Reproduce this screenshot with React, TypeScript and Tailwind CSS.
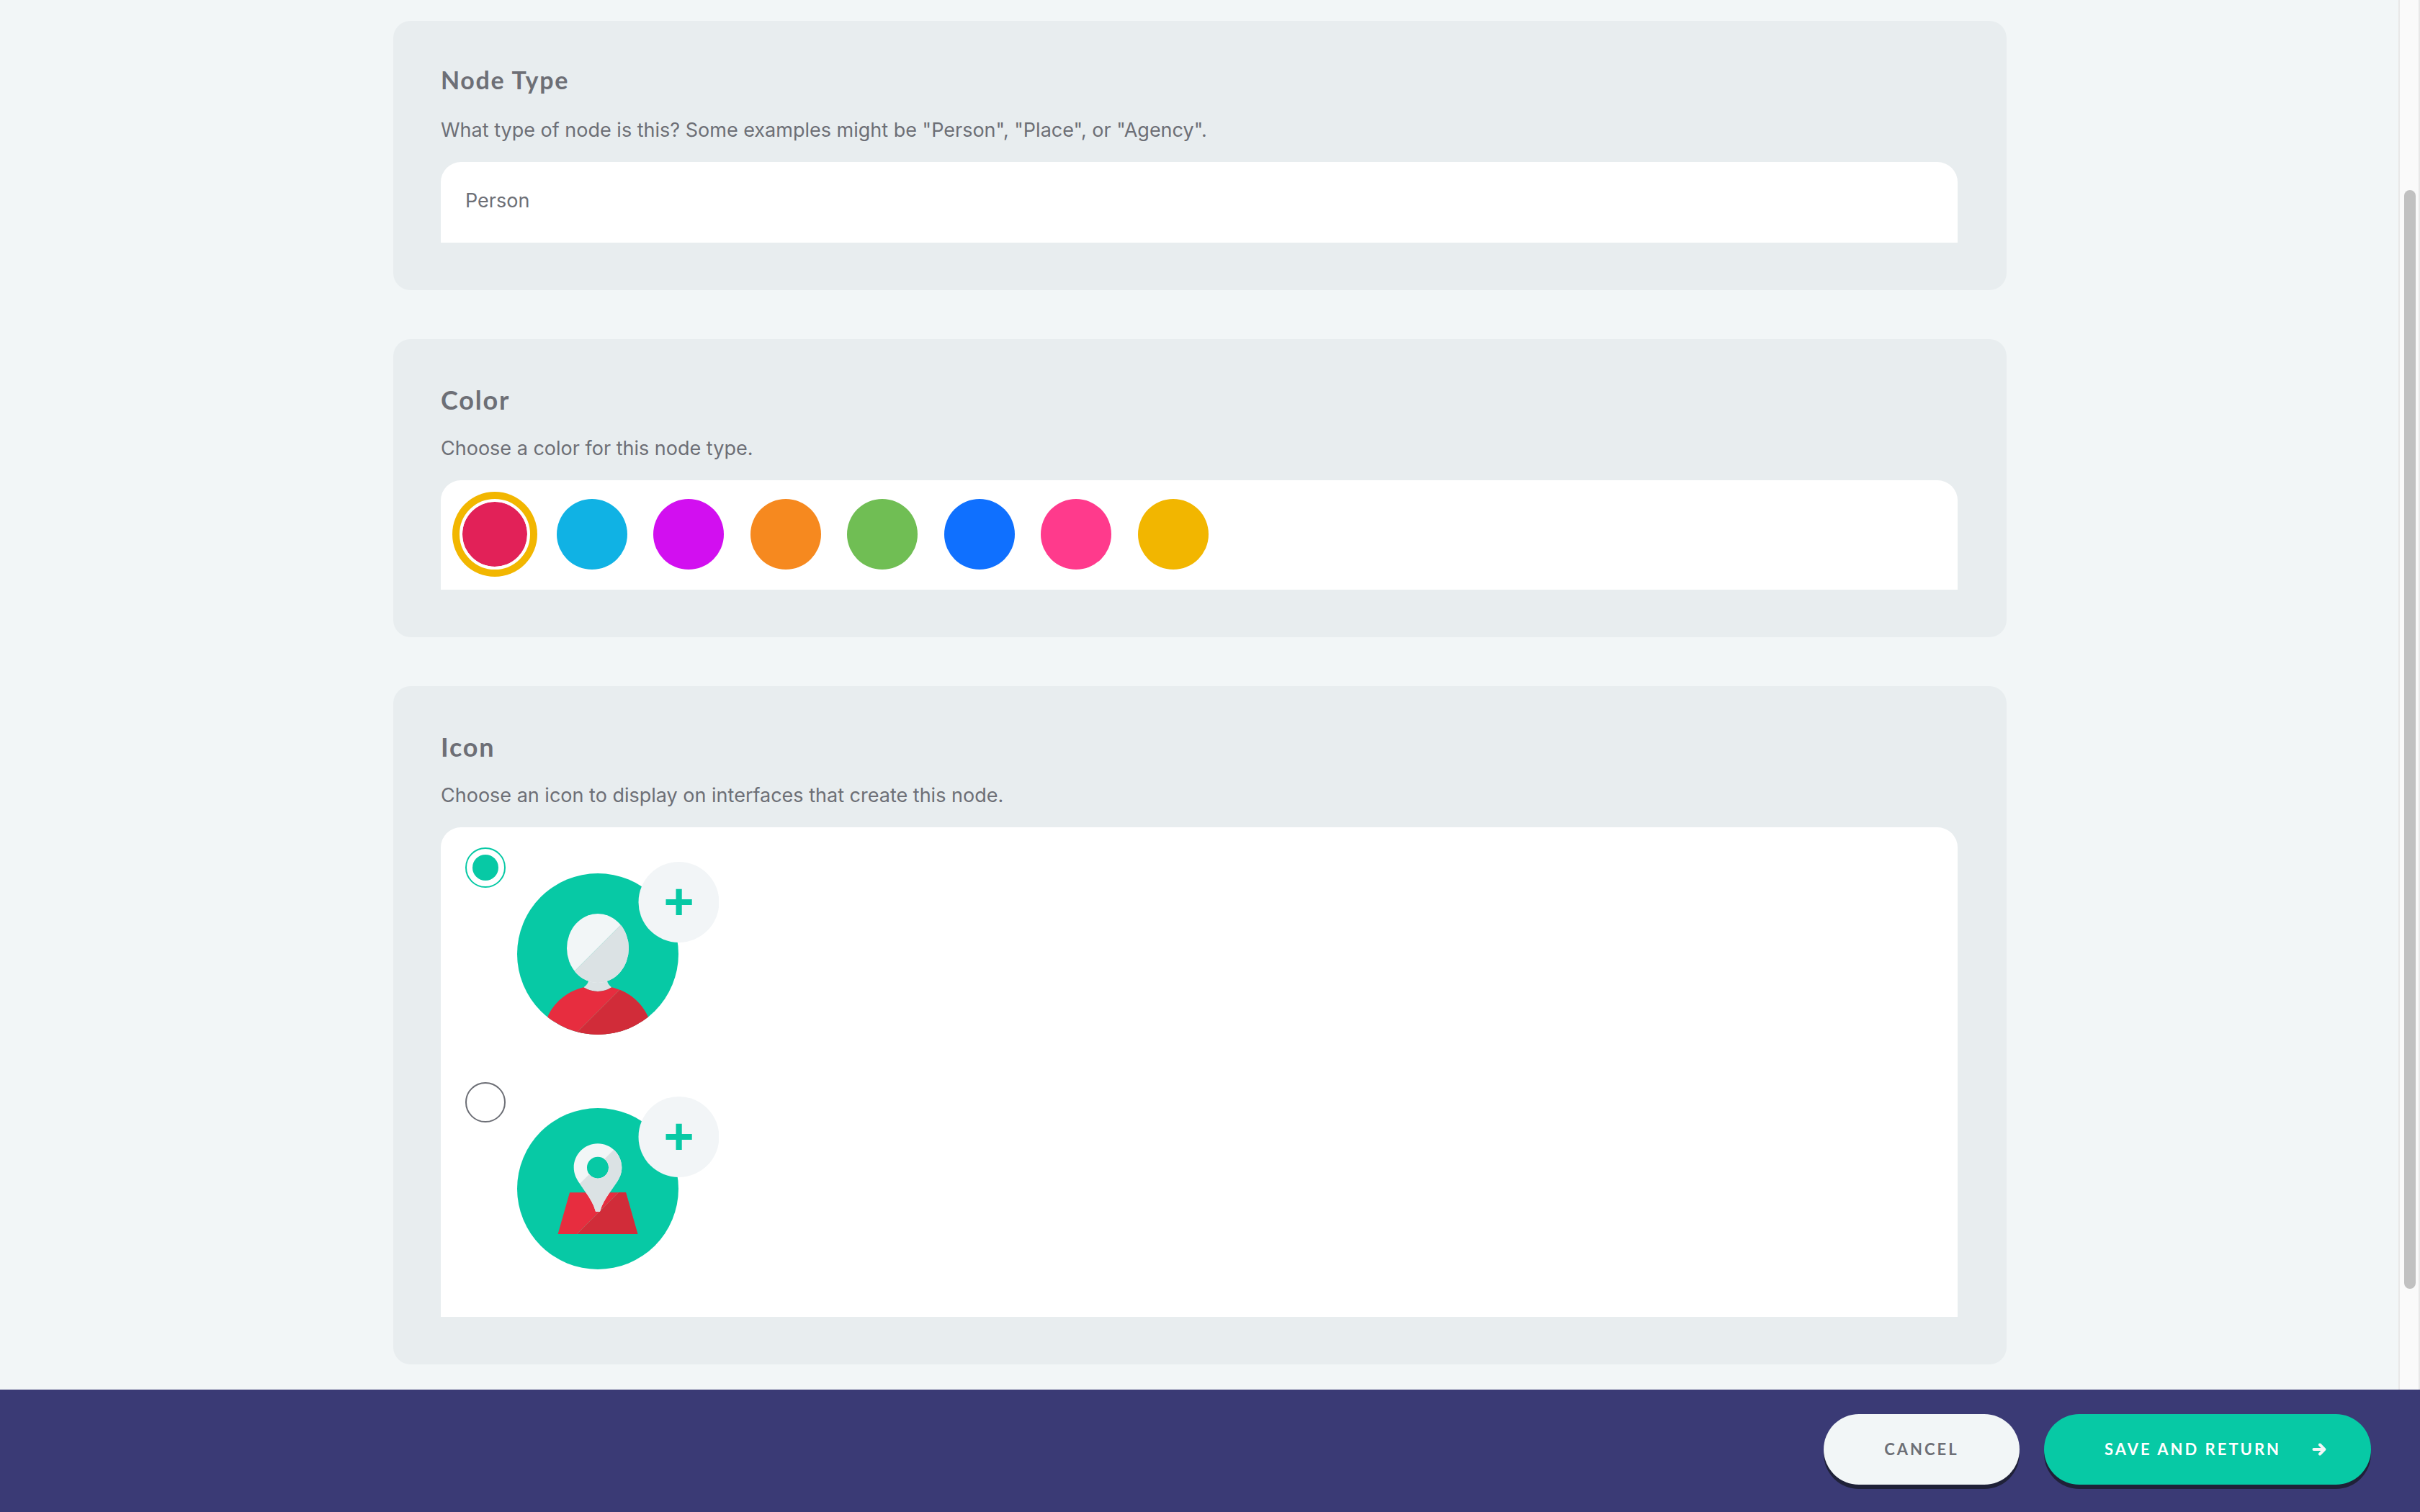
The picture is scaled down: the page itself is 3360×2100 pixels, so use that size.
import React, { useState } from "react";

type Swatch = { name: string; fill: string };

const SWATCHES: Swatch[] = [
  { name: "Red", fill: "bg-[#e22158]" },
  { name: "Sky", fill: "bg-[#10b2e4]" },
  { name: "Purple", fill: "bg-[#d20ff0]" },
  { name: "Orange", fill: "bg-[#f6891f]" },
  { name: "Green", fill: "bg-[#70be54]" },
  { name: "Blue", fill: "bg-[#0f70ff]" },
  { name: "Pink", fill: "bg-[#ff3a8c]" },
  { name: "Amber", fill: "bg-[#f2b600]" },
];

function AddBadge() {
  return (
    <>
      <circle cx="224.5" cy="56" r="56" fill="#f2f5f7" />
      <path d="M206.5 56H242.7M224.6 37.8V74" stroke="#07c9a5" strokeWidth="8.2" fill="none" />
    </>
  );
}

function PersonIcon() {
  const body =
    "M92.3 174.3C70 179.5 51 195 42 216L42 242H182L182 216C173 195 154 179.5 131.2 174.3Q122 180 112 180Q102 180 92.3 174.3Z";
  return (
    <svg viewBox="0 0 280 240" className="w-[280px]" role="img" aria-label="Add a person">
      <defs>
        <clipPath id="disc">
          <circle cx="112" cy="128" r="112" />
        </clipPath>
        <clipPath id="body">
          <path d={body} />
        </clipPath>
        <clipPath id="head">
          <ellipse cx="112" cy="120" rx="43" ry="48" />
        </clipPath>
      </defs>
      <circle cx="112" cy="128" r="112" fill="#07c9a5" />
      <path
        d="M99 160V165.7C98 169.5 95 172.5 92.3 174.3Q101 180 112 180Q123 180 131.2 174.3C129 172.5 126 169.5 125 165.7V160Z"
        fill="#dbe2e4"
      />
      <g clipPath="url(#head)">
        <rect x="60" y="60" width="110" height="120" fill="#f2f6f7" />
        <path d="M171.6 60L51.6 180H180V60Z" fill="#dbe2e4" />
        <path d="M171.6 60L51.6 180" stroke="#07c9a5" strokeOpacity="0.45" strokeWidth="0.4" />
      </g>
      <g clipPath="url(#disc)">
        <g clipPath="url(#body)">
          <rect x="30" y="160" width="170" height="84" fill="#e72d3f" />
          <path d="M160 160L76 244H200V160Z" fill="#d12c39" />
          <path d="M160 160L76 244" stroke="#9c8a72" strokeWidth="0.5" />
        </g>
      </g>
      <AddBadge />
    </svg>
  );
}

function PlaceIcon() {
  const pin =
    "M112 65.2C93.5 65.2 78.7 80.2 78.7 98.7C78.7 107 82 114 87 121L95.5 133.3C101.5 142 106.5 150.5 109 159.7H115C117.5 150.5 122.5 142 128.5 133.3L137 121C142 114 145.3 107 145.3 98.7C145.3 80.2 130.5 65.2 112 65.2ZM112 83.7A15 15 0 1 1 112 113.7A15 15 0 1 1 112 83.7Z";
  return (
    <svg viewBox="0 0 280 240" className="w-[280px]" role="img" aria-label="Add a place">
      <defs>
        <clipPath id="pin">
          <path d={pin} clipRule="evenodd" />
        </clipPath>
      </defs>
      <circle cx="112" cy="128" r="112" fill="#07c9a5" />
      <path d="M73 133.3H151L167.4 191H56.6Z" fill="#e72d3f" />
      <path d="M140.7 133.3H151L167.4 191H83Z" fill="#d12c39" />
      <path d="M140.7 133.3L83 191" stroke="#9c8a72" strokeWidth="0.5" />
      <g clipPath="url(#pin)">
        <rect x="70" y="60" width="90" height="110" fill="#f2f6f7" />
        <path d="M148 60L38 170H160V60Z" fill="#dbe2e4" />
      </g>
      <AddBadge />
    </svg>
  );
}

type SectionProps = {
  title: React.ReactNode;
  titleClass?: string;
  hint: string;
  hintId: string;
  children: React.ReactNode;
};

function Section({ title, titleClass = "mb-6 text-4xl leading-[44px]", hint, hintId, children }: SectionProps) {
  return (
    <section className="rounded-3xl bg-[#e8edef] pt-[62px] pr-[68px] pb-[66px] pl-[66px]">
      <h2 className={`font-['Lato',sans-serif] font-bold tracking-wider ${titleClass}`}>{title}</h2>
      <p id={hintId} className="mb-[22px] text-[27px] leading-[44px]">
        {hint}
      </p>
      {children}
    </section>
  );
}

export default function App() {
  const [nodeType, setNodeType] = useState("Person");
  const [color, setColor] = useState("Red");
  const [icon, setIcon] = useState("person");

  return (
    <div className="flex h-screen flex-col bg-[#f2f6f7] font-['Inter',sans-serif] text-[#6d6f76]">
      <div className="flex min-h-0 flex-1">
        <main className="min-w-0 flex-1 overflow-hidden pt-[29px] pl-0.5">
          <form className="mx-auto flex max-w-[2240px] flex-col gap-[68px]">
            <Section
              title={<label htmlFor="node-type">Node Type</label>}
              titleClass="mb-7 text-[34px] leading-10"
              hint={'What type of node is this? Some examples might be "Person", "Place", or "Agency".'}
              hintId="node-type-hint"
            >
              <input
                id="node-type"
                type="text"
                aria-describedby="node-type-hint"
                value={nodeType}
                onChange={(e) => setNodeType(e.target.value)}
                className="block w-full rounded-t-[28px] bg-white px-[34px] pt-8 pb-9 text-[27px] leading-[44px] outline-none"
              />
            </Section>

            <Section title="Color" hint="Choose a color for this node type." hintId="color-hint">
              <div
                role="radiogroup"
                aria-labelledby="color-hint"
                className="rounded-t-[28px] bg-white px-[26px] pt-[26px] pb-7"
              >
                <div className="flex max-w-[1040px] justify-between">
                  {SWATCHES.map((s) => (
                    <input
                      key={s.name}
                      type="radio"
                      name="color"
                      aria-label={s.name}
                      checked={color === s.name}
                      onChange={() => setColor(s.name)}
                      className={`size-[98px] appearance-none rounded-full border-white bg-clip-padding ring-[#f2b600] checked:border-4 checked:ring-10 ${s.fill}`}
                    />
                  ))}
                </div>
              </div>
            </Section>

            <Section
              title="Icon"
              hint="Choose an icon to display on interfaces that create this node."
              hintId="icon-hint"
            >
              <div
                role="radiogroup"
                aria-labelledby="icon-hint"
                className="rounded-t-[28px] bg-white px-[34px] pt-7"
              >
                {["person", "place"].map((name) => (
                  <label key={name} className="flex w-fit items-start gap-4 pb-[66px]">
                    <input
                      type="radio"
                      name="icon"
                      value={name}
                      checked={icon === name}
                      onChange={() => setIcon(name)}
                      className="size-14 appearance-none rounded-full border-2 border-[#6d6f76] bg-clip-content p-2 checked:border-[#07c9a5] checked:bg-[#07c9a5]"
                    />
                    <span className="pt-5">{name === "person" ? <PersonIcon /> : <PlaceIcon />}</span>
                  </label>
                ))}
              </div>
            </Section>
          </form>
        </main>

        <div
          aria-hidden="true"
          className="flex w-[30px] flex-col items-end border-x-2 border-[#e8e8e8] bg-[#fafafa] pr-1"
        >
          <div className="grow-[264]" />
          <div className="w-4 grow-[1526] rounded-full bg-[#c1c1c1]" />
          <div className="grow-[140]" />
        </div>
      </div>

      <footer className="flex justify-end gap-[34px] bg-[#3a3a75] px-[68px] pt-[34px] pb-[38px] font-['Lato',sans-serif] text-[22px] leading-[34px] font-bold tracking-[3px]">
        <button
          type="button"
          className="min-w-[272px] rounded-full bg-[#f2f6f7] px-[82px] py-8 shadow-[0_6px_0_#1f2138]"
        >
          CANCEL
        </button>
        <button
          type="submit"
          className="flex min-w-[454px] items-center justify-between rounded-full bg-[#07c9a5] pr-[62px] pl-[84px] text-white shadow-[0_6px_0_#1f2138]"
        >
          SAVE AND RETURN
          <svg viewBox="0 0 20 18" className="w-5" fill="none" aria-hidden="true">
            <path
              d="M2.5 9H17M11 2.5L17.3 9L11 15.5"
              stroke="#f2f6f7"
              strokeWidth="4"
              strokeLinecap="round"
              strokeLinejoin="round"
            />
          </svg>
        </button>
      </footer>
    </div>
  );
}
